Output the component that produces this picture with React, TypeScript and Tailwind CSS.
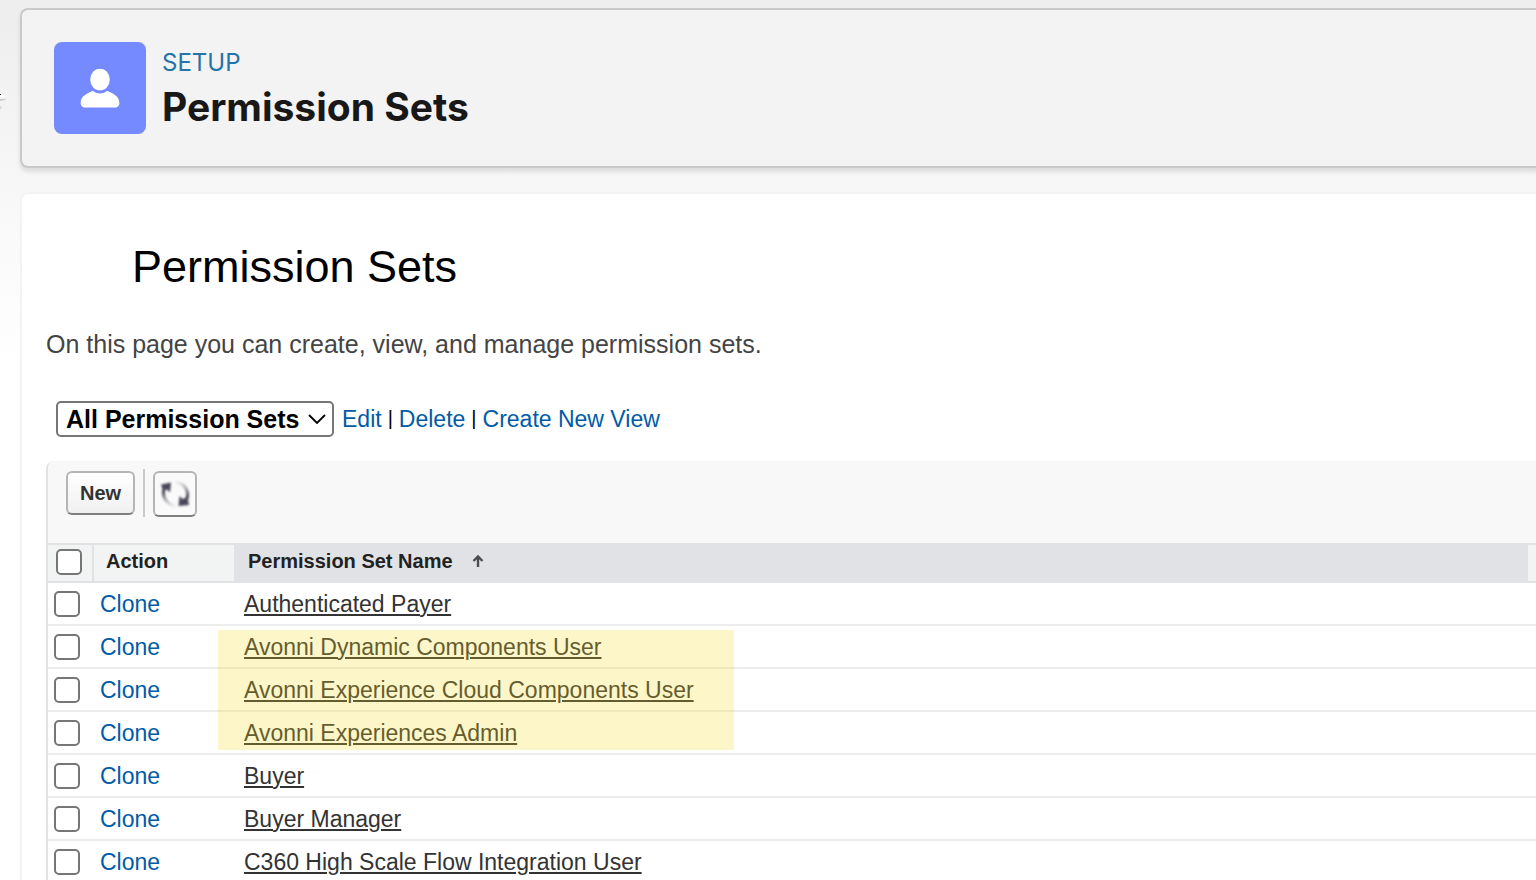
const permissionSets = [
  'Authenticated Payer',
  'Avonni Dynamic Components User',
  'Avonni Experience Cloud Components User',
  'Avonni Experiences Admin',
  'Buyer',
  'Buyer Manager',
  'C360 High Scale Flow Integration User',
];

const checkboxClass =
  'block h-[26px] w-[26px] appearance-none rounded-[5px] border-2 border-[#767676] bg-white checked:bg-[#0176d3]';

function UserIcon() {
  return (
    <svg viewBox="0 0 92 92" className="h-[92px] w-[92px]" aria-hidden="true">
      <ellipse cx="46" cy="37.5" rx="9.8" ry="10.8" fill="#fff" />
      <path
        d="M38 49.2c-6 2.4-11.3 5.600-11.300 11.300v1c0 2.200 1.800 4 4 4h30.600c2.200 0 4-1.800 4-4v-1c0-5.700-5.300-8.900-11.300-11.300-.5-.2-1-.1-1.400.1-2 1.400-4.300 2.200-6.600 2.200s-4.600-.8-6.600-2.200c-.4-.2-.9-.3-1.400-.1z"
        fill="#fff"
      />
    </svg>
  );
}

function RefreshIcon() {
  return (
    <svg viewBox="0 0 32 32" className="h-8 w-8 shrink-0" fill="none" aria-hidden="true">
      <defs>
        <linearGradient id="arcLeft" x1="4" y1="10" x2="13" y2="28" gradientUnits="userSpaceOnUse">
          <stop offset="0.200" stopColor="#4a4958" />
          <stop offset="1" stopColor="#d8d8dc" stopOpacity="0.500" />
        </linearGradient>
        <linearGradient id="arcRight" x1="29" y1="22" x2="20" y2="4" gradientUnits="userSpaceOnUse">
          <stop offset="0.200" stopColor="#4a4958" />
          <stop offset="1" stopColor="#d8d8dc" stopOpacity="0.500" />
        </linearGradient>
        <filter id="soft">
          <feGaussianBlur stdDeviation="0.800" />
        </filter>
      </defs>
      <g filter="url(#soft)">
        <path d="M5.500 10c-3 7 1 16 10.500 18" stroke="url(#arcLeft)" strokeWidth="3" />
        <path d="M28 21c2-7-1-15-11-17" stroke="url(#arcRight)" strokeWidth="3" />
        <path d="M2 6.500l10-2-1 10-3-3-4 1z" fill="#4a4958" />
        <path d="M30 27l-10.500 1 1-10 3 3 5-2z" fill="#4a4958" />
      </g>
    </svg>
  );
}

function PageHeader() {
  return (
    <header className="-mr-2 flex items-start gap-4 rounded-l-lg border-2 border-r-0 border-[#c9c9c9] bg-[#f3f3f3] px-8 pt-8 pb-8 shadow-[0_4px_4px_rgba(0,0,0,0.1)]">
      <div className="shrink-0 rounded-lg bg-[#768aff]">
        <UserIcon />
      </div>
      <div className="pt-[5px] font-['Inter',sans-serif]">
        <p className="text-[24px] leading-8 text-[#2574a9]">SETUP</p>
        <h1 className="text-[39px] leading-[55px] font-bold text-[#181818]">Permission Sets</h1>
      </div>
    </header>
  );
}

function ViewPicker() {
  return (
    <div className="ml-[10px] flex items-center text-[23px] leading-9 text-black">
      <div className="relative mr-2">
        <select
          aria-label="View"
          className="block h-9 w-[278px] appearance-none rounded-[5px] border-2 border-[#767676] bg-white pl-2 text-[25px] leading-8 font-bold"
        >
          <option>All Permission Sets</option>
        </select>
        <svg
          viewBox="0 0 18 10"
          className="pointer-events-none absolute top-[13px] right-2 h-[10px] w-[18px]"
          fill="none"
          aria-hidden="true"
        >
          <path d="M1 1l8 8 8-8" stroke="#000" strokeWidth="1.800" />
        </svg>
      </div>
      <nav className="flex gap-[6px]">
        <a href="#edit" className="text-[#015ba7]">Edit</a>
        <span className="text-[20px] leading-[34px]">|</span>
        <a href="#delete" className="text-[#015ba7]">Delete</a>
        <span className="text-[20px] leading-[34px]">|</span>
        <a href="#create" className="text-[#015ba7]">Create New View</a>
      </nav>
    </div>
  );
}

function Toolbar() {
  return (
    <div className="flex h-[82px] items-start bg-[#f8f8f8] pt-2 pl-[18px]">
      <button
        type="button"
        className="mt-[2px] h-11 w-[69px] rounded-md border-2 border-[#b5b5b5] border-b-[#7f7f7f] bg-linear-to-b from-white to-[#f0f0f0] text-[20px] leading-[38px] font-bold text-[#333]"
      >
        New
      </button>
      <span className="mx-2 h-12 w-[2px] bg-[#c9c9c9]" />
      <button
        type="button"
        aria-label="Refresh"
        className="mt-[2px] flex h-[46px] w-11 items-center justify-center rounded-md border-2 border-[#b5b5b5] border-b-[#7f7f7f] bg-[#fafafa]"
      >
        <RefreshIcon />
      </button>
    </div>
  );
}

function PermissionTable() {
  return (
    <div className="relative">
      <table className="w-full table-fixed border-collapse text-left">
        <colgroup>
          <col className="w-[46px]" />
          <col className="w-[140px]" />
          <col />
          <col className="w-2" />
        </colgroup>
        <thead>
          <tr className="h-10 bg-[#f2f4f3] text-[20px] leading-7 text-[#222] shadow-[inset_0_2px_#e0e2e5,inset_0_-2px_#e0e2e5]">
            <th className="p-0 pb-[2px] pl-2 shadow-[inset_-2px_0_#e0e2e5]">
              <input type="checkbox" aria-label="Select all" className={checkboxClass} />
            </th>
            <th className="p-0 pb-1 pl-3">Action</th>
            <th className="bg-[#e1e2e6] p-0 pb-1 pl-[14px]">
              <a href="#sort" className="inline-flex items-center gap-[18px]">
                Permission Set Name
                <svg viewBox="0 0 14 16" className="h-4 w-[14px]" fill="none" aria-hidden="true">
                  <path d="M7 14V3.500M2.500 8l4.500-4.500 4.500 4.500" stroke="#4c4c4c" strokeWidth="2.400" />
                </svg>
              </a>
            </th>
            <th className="p-0" />
          </tr>
        </thead>
        <tbody>
          {permissionSets.map((name) => (
            <tr key={name} className="h-[43px] bg-white text-[23px] leading-7 shadow-[inset_0_-2px_#ededed]">
              <td className="p-0 pb-[2px] pl-[6px]">
                <input type="checkbox" aria-label={`Select ${name}`} className={checkboxClass} />
              </td>
              <td className="p-0 pb-[2px] pl-[6px]">
                <a href="#clone" className="text-[#015ba7]">Clone</a>
              </td>
              <td className="p-0 pb-[2px] pl-[10px]" colSpan={2}>
                <a href="#detail" className="text-[#333] underline decoration-2 underline-offset-2">
                  {name}
                </a>
              </td>
            </tr>
          ))}
        </tbody>
      </table>
      {/* marker over the Avonni rows */}
      <div className="pointer-events-none absolute top-[87px] left-[170px] h-[120px] w-[516px] bg-[#f9dc22]/25" />
    </div>
  );
}

export default function App() {
  return (
    <div className="relative h-screen overflow-hidden bg-white bg-[linear-gradient(#ededed,#f8f8f8_200px,#ffffff_370px)] pt-2 pl-5 font-['Liberation_Sans',Arial,sans-serif]">
      <svg viewBox="0 0 8 32" className="absolute top-[88px] left-0 h-8 w-2" aria-hidden="true">
        <path d="M0 11l5 0 2-1-2 2-5 1z" fill="#c8c8c8" />
        <path d="M0 4l6 5H0z" fill="#fff" />
        <path d="M0 6h1v1H0z" fill="#222" />
        <path d="M0 18l2 1-2 3z" fill="#d4d4d4" />
      </svg>
      <PageHeader />
      <main className="mt-6 rounded-l-lg border-2 border-r-0 border-[#f3f3f3] bg-white pl-6">
        <h2 className="pt-[45px] pl-[86px] text-[45px] leading-[56px] text-black">Permission Sets</h2>
        <p className="mt-8 mb-10 text-[25px] leading-[34px] text-[#444]">
          On this page you can create, view, and manage permission sets.
        </p>
        <ViewPicker />
        <section className="mt-6 overflow-hidden rounded-tl-lg border-l-2 border-[#e0e2e5]">
          <Toolbar />
          <PermissionTable />
        </section>
      </main>
    </div>
  );
}
